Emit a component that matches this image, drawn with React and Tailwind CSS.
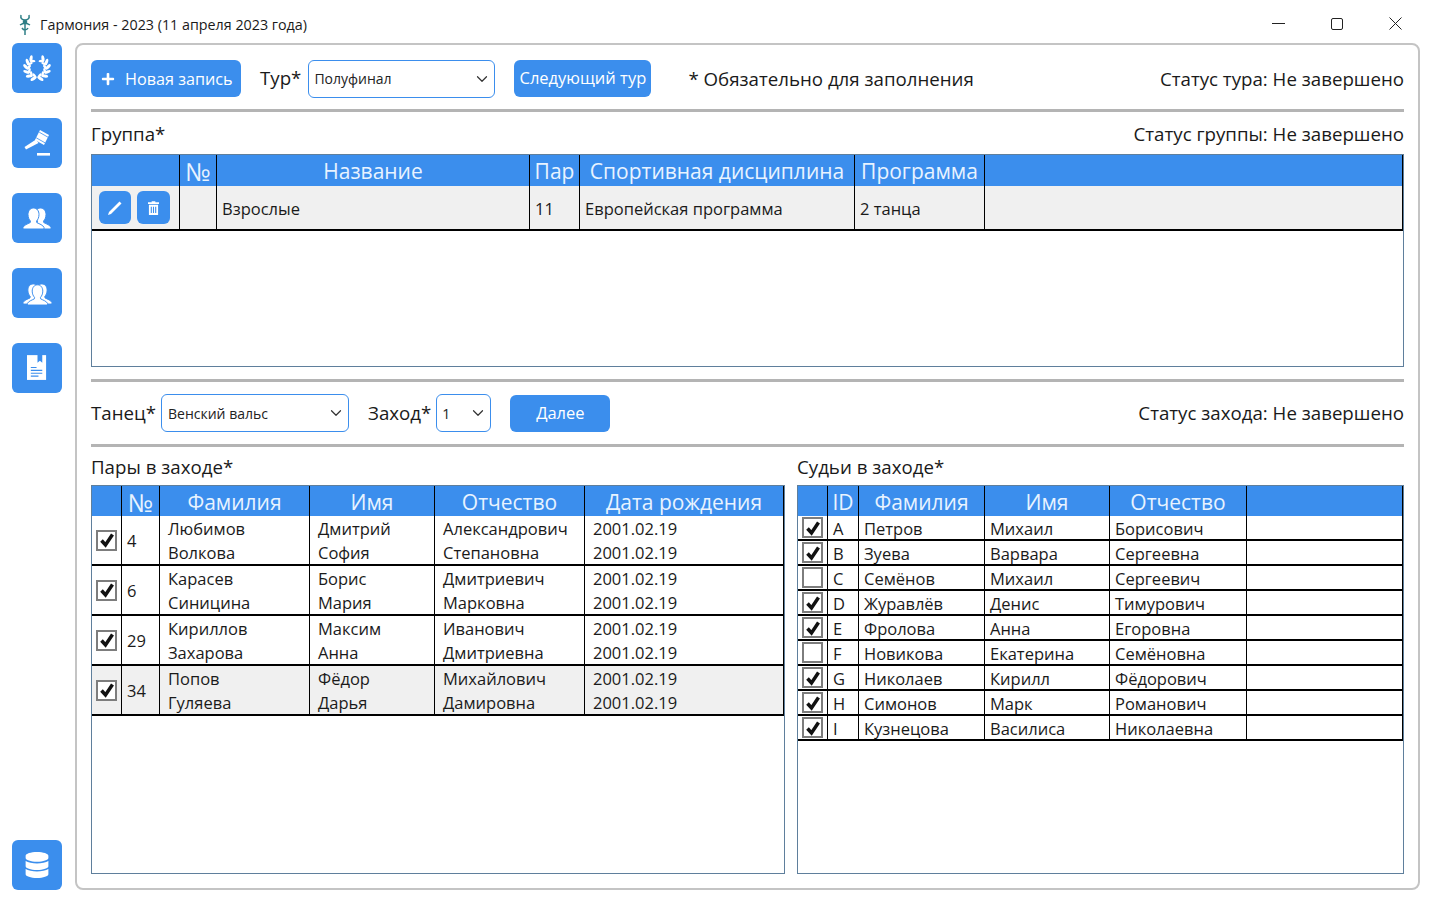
import { FaDatabase, FaPlus } from "react-icons/fa";
import { ChevronDown } from "lucide-react";

const blue = "bg-[#3b8eed]";

const pairs = [
  ["4", "Любимов", "Волкова", "Дмитрий", "София", "Александрович", "Степановна"],
  ["6", "Карасев", "Синицина", "Борис", "Мария", "Дмитриевич", "Марковна"],
  ["29", "Кириллов", "Захарова", "Максим", "Анна", "Иванович", "Дмитриевна"],
  ["34", "Попов", "Гуляева", "Фёдор", "Дарья", "Михайлович", "Дамировна"],
];

const judges = [
  [true, "A", "Петров", "Михаил", "Борисович"],
  [true, "B", "Зуева", "Варвара", "Сергеевна"],
  [false, "C", "Семёнов", "Михаил", "Сергеевич"],
  [true, "D", "Журавлёв", "Денис", "Тимурович"],
  [true, "E", "Фролова", "Анна", "Егоровна"],
  [false, "F", "Новикова", "Екатерина", "Семёновна"],
  [true, "G", "Николаев", "Кирилл", "Фёдорович"],
  [true, "H", "Симонов", "Марк", "Романович"],
  [true, "I", "Кузнецова", "Василиса", "Николаевна"],
];

const Wreath = () => {
  const leaves = [];
  for (let a = 32; a <= 165; a += 26) {
    const r = (a * Math.PI) / 180;
    [1, -1].forEach((s) => {
      // outer leaf splays out from the branch, inner one lies along it
      const x = 12 + s * 9.6 * Math.sin(r);
      const y = 12 - 9.6 * Math.cos(r);
      const ix = 12 + s * 7 * Math.sin(r);
      const iy = 12 - 7 * Math.cos(r);
      leaves.push(
        <ellipse key={`o${a}${s}`} cx={x} cy={y} rx="1.3" ry="2.9" transform={`rotate(${s * (a - 40)} ${x} ${y})`} fill="white" />,
        <ellipse key={`i${a}${s}`} cx={ix} cy={iy} rx="1.1" ry="2.4" transform={`rotate(${s * (a - 125)} ${ix} ${iy})`} fill="white" />
      );
    });
  }
  return <svg viewBox="0 0 24 24" className="w-[28px] h-[28px]">{leaves}</svg>;
};

const Gavel = () => (
  <svg viewBox="0 0 28 28" className="w-[28px] h-[28px]" fill="white">
    <path d="M17 1 L26 6 L21 16 L12 11 Z" />
    <path d="M16.2 3.2 L25 8.2 M13.2 8.8 L22 13.8" stroke="#3b8eed" strokeWidth="0.8" />
    <path d="M13 10.5 L15.5 14 L3 20.5 L1.5 18 Z" />
    <rect x="14" y="24" width="13" height="2.6" />
  </svg>
);

const Person = ({ x = 0 }) => (
  <path transform={`translate(${x} 0)`} d="M10.5 3 C14 3 16 6 16 9.5 C16 12.5 14.8 14.8 13.6 16 L13.8 17.6 C16.5 19 20 20 21 22.4 L21 24 L0 24 L0 22.4 C1 20 4.5 19 7.2 17.6 L7.4 16 C6.2 14.8 5 12.5 5 9.5 C5 6 7 3 10.5 3 Z" />
);

const Users = () => (
  <svg viewBox="0 0 28 26" className="w-[28px] h-[26px]" fill="white" stroke="#3b8eed" strokeWidth="1">
    <Person x={7} />
    <Person x={0} />
  </svg>
);

const Crowd = () => (
  <svg viewBox="0 0 30 26" className="w-[29px] h-[25px]" fill="white" stroke="#3b8eed" strokeWidth="1">
    <Person x={0} />
    <Person x={9} />
    <g transform="translate(4.5 1)"><Person /></g>
  </svg>
);

const Doc = () => (
  <svg viewBox="0 0 22 27" className="w-[21px] h-[26px]">
    <path d="M0 0 H20 V26 H0 Z" fill="white" />
    <path d="M11 0 H16 V8 L13.5 5.8 L11 8 Z" fill="#3b8eed" />
    <path d="M4 13 H10 M4 16 H16 M4 19 H16 M4 22 H12" stroke="#3b8eed" strokeWidth="1.2" />
  </svg>
);

const Logo = () => (
  <svg viewBox="0 0 14 22" className="w-[14px] h-[22px]" fill="none" stroke="#2f7f86" strokeWidth="1.5">
    <path d="M3 1 C2 5 5 6 7 6 C9 6 12 5 11 1" />
    <circle cx="7" cy="8" r="1.6" fill="#2f7f86" />
    <path d="M2 11 C5 9 9 9 12 11 M7 9 L7 21 M4 14 C6 17 9 16 10 14" />
  </svg>
);

const Pencil = () => (
  <svg viewBox="0 0 16 16" className="w-[16px] h-[16px]" fill="white">
    <path d="M12.5 1.5 L14.5 3.5 L4 14 L1 15 L2 12 Z" />
  </svg>
);

const Trash = () => (
  <svg viewBox="0 0 12 15" className="w-[11px] h-[14px]" fill="white">
    <path d="M4 0 H8 V1.2 H12 V3 H0 V1.2 H4 Z" />
    <path fillRule="evenodd" d="M1 4 H11 V15 H1 Z M3 6 V13 H4.2 V6 Z M5.4 6 V13 H6.6 V6 Z M7.8 6 V13 H9 V6 Z" />
  </svg>
);

const SideButton = ({ children, className = "" }) => (
  <button className={`w-[50px] h-[50px] rounded-md ${blue} flex items-center justify-center ${className}`}>{children}</button>
);

const Select = ({ value, className }) => (
  <div className={`h-[38px] border border-[#3b8eed] rounded-md flex items-center justify-between pl-[5px] pr-[3px] text-[14px] text-[#222] ${className}`}>
    <span>{value}</span>
    <ChevronDown size={18} strokeWidth={1.6} className="text-[#333]" />
  </div>
);

const Hr = ({ className = "" }) => <div className={`h-[3px] bg-[#b4b4b4] ${className}`} />;

const Check = ({ checked }) => (
  <div className="w-[21px] h-[21px] border-2 border-[#7d7d7d] bg-white flex items-center justify-center shrink-0">
    {checked && (
      <svg viewBox="0 0 16 16" className="w-[16px] h-[16px]">
        <path d="M2.5 8.5 L6.5 13 L13.5 2.5" fill="none" stroke="#111" strokeWidth="3.5" />
      </svg>
    )}
  </div>
);

const Head = ({ className = "", children }) => (
  <div className={`h-full border-r border-black flex items-center justify-center pt-[2px] text-[21px] leading-none whitespace-nowrap ${className}`}>{children}</div>
);

// pad holds the padding classes, they differ between the tables
const Cell = ({ className = "", pad = "pl-[5px] pt-[1px]", children }) => (
  <div className={`h-full border-r border-black flex flex-col justify-center leading-[24px] whitespace-nowrap ${pad} ${className}`}>{children}</div>
);

const App = () => {
  return (
    <div className="w-[1434px] h-[905px] bg-white overflow-hidden text-[#1a1a1a] font-['Open_Sans',sans-serif] flex flex-col">
      {/* title bar */}
      <div className="h-[43px] flex items-center pl-[18px] pr-[32px] pt-[6px] shrink-0">
        <Logo />
        <span className="ml-[8px] text-[14.3px]">Гармония - 2023 (11 апреля 2023 года)</span>
        <div className="ml-auto mb-[2px] flex items-center gap-[46px]">
          <div className="w-[13px] h-[1px] bg-[#222]" />
          <div className="w-[12px] h-[12px] border border-[#222] rounded-[2px]" />
          <svg viewBox="0 0 13 13" className="w-[13px] h-[13px]"><path d="M0.5 0.5 L12.5 12.5 M12.5 0.5 L0.5 12.5" stroke="#222" strokeWidth="1" /></svg>
        </div>
      </div>

      <div className="flex h-[847px]">
        {/* sidebar */}
        <div className="w-[75px] pl-[12px] flex flex-col gap-[25px] shrink-0">
          <SideButton><Wreath /></SideButton>
          <SideButton><Gavel /></SideButton>
          <SideButton><Users /></SideButton>
          <SideButton><Crowd /></SideButton>
          <SideButton><Doc /></SideButton>
          <SideButton className="mt-auto"><FaDatabase size={26} color="white" /></SideButton>
        </div>

        {/* main panel */}
        <div className="w-[1345px] border-2 border-[#c4c4c4] rounded-lg px-[14px] pt-[15px] flex flex-col">
          {/* tour row */}
          <div className="h-[37px] flex items-center text-[18.7px] shrink-0">
            <button className={`h-[37px] w-[150px] ${blue} rounded-md text-white text-[16.2px] flex items-center pl-[10px] pt-[1px] gap-[10px]`}>
              <FaPlus size={14} /> Новая запись
            </button>
            <span className="ml-[19px]">Тур*</span>
            <Select value="Полуфинал" className="ml-[7px] w-[187px]" />
            <button className={`ml-[19px] h-[37px] w-[137px] ${blue} rounded-md text-white text-[16.5px]`}>Следующий тур</button>
            <span className="ml-[37px] pt-[1px]">* Обязательно для заполнения</span>
            <span className="ml-auto pt-[1px]">Статус тура: Не завершено</span>
          </div>
          <Hr className="mt-[12px] shrink-0" />

          {/* group */}
          <div className="h-[42px] pt-[2px] flex items-center justify-between text-[18.7px] shrink-0">
            <span>Группа*</span>
            <span>Статус группы: Не завершено</span>
          </div>
          <div className="h-[213px] border border-[#5f7f9c] shrink-0">
            <div className={`h-[31px] ${blue} text-[#e8f3ff] flex`}>
              <Head className="w-[88px]" />
              <Head className="w-[37px]"><span className="text-[25px]">№</span></Head>
              <Head className="w-[313px]">Название</Head>
              <Head className="w-[50px]">Пар</Head>
              <Head className="w-[275px]">Спортивная дисциплина</Head>
              <Head className="w-[130px]">Программа</Head>
              <Head className="flex-1" />
            </div>
            <div className="h-[45px] bg-[#f0f0f0] border-b-2 border-black flex text-[16.5px]">
              <div className="w-[88px] h-full border-r border-black flex items-center pl-[7px] gap-[6px]">
                <button className={`w-[32px] h-[33px] ${blue} rounded-md flex items-center justify-center`}><Pencil /></button>
                <button className={`w-[33px] h-[33px] ${blue} rounded-md flex items-center justify-center`}><Trash /></button>
              </div>
              <Cell className="w-[37px]" />
              <Cell pad="pl-[5px] pt-[3px]" className="w-[313px]">Взрослые</Cell>
              <Cell pad="pl-[5px] pt-[3px]" className="w-[50px]">11</Cell>
              <Cell pad="pl-[5px] pt-[3px]" className="w-[275px]">Европейская программа</Cell>
              <Cell pad="pl-[5px] pt-[3px]" className="w-[130px]">2 танца</Cell>
              <Cell className="flex-1" />
            </div>
          </div>
          <Hr className="mt-[12px] shrink-0" />

          {/* dance row */}
          <div className="h-[62px] flex items-center text-[18.7px] shrink-0">
            <span>Танец*</span>
            <Select value="Венский вальс" className="ml-[5px] w-[188px] pl-[6px]" />
            <span className="ml-[19px]">Заход*</span>
            <Select value="1" className="ml-[5px] w-[55px]" />
            <button className={`ml-[19px] h-[37px] w-[100px] ${blue} rounded-md text-white text-[16.5px]`}>Далее</button>
            <span className="ml-auto">Статус захода: Не завершено</span>
          </div>
          <Hr className="shrink-0" />

          {/* tables */}
          <div className="flex gap-[12px] mt-[6px]">
            <div className="w-[694px]">
              <div className="h-[32px] pb-[4px] flex items-center text-[18.7px]">Пары в заходе*</div>
              <div className="h-[389px] border border-[#5f7f9c]">
                <div className={`h-[30px] ${blue} text-[#e8f3ff] flex`}>
                  <Head className="w-[30px]" />
                  <Head className="w-[38px]"><span className="text-[25px]">№</span></Head>
                  <Head className="w-[150px]">Фамилия</Head>
                  <Head className="w-[125px]">Имя</Head>
                  <Head className="w-[150px]">Отчество</Head>
                  <Head className="w-[199px]">Дата рождения</Head>
                </div>
                {pairs.map((p, i) => (
                  <div key={p[0]} className={`h-[50px] border-b-2 border-black flex text-[16.5px] ${i === 3 ? "bg-[#f0f0f0]" : "bg-white"}`}>
                    <div className="w-[30px] h-full border-r border-black flex items-center justify-center"><Check checked /></div>
                    <Cell className="w-[38px]">{p[0]}</Cell>
                    <Cell pad="pl-[8px] pt-[1px]" className="w-[150px]"><span>{p[1]}</span><span>{p[2]}</span></Cell>
                    <Cell pad="pl-[8px] pt-[1px]" className="w-[125px]"><span>{p[3]}</span><span>{p[4]}</span></Cell>
                    <Cell pad="pl-[8px] pt-[1px]" className="w-[150px]"><span>{p[5]}</span><span>{p[6]}</span></Cell>
                    <Cell pad="pl-[8px] pt-[1px]" className="w-[199px]"><span>2001.02.19</span><span>2001.02.19</span></Cell>
                  </div>
                ))}
              </div>
            </div>
            <div className="w-[607px]">
              <div className="h-[32px] pb-[4px] flex items-center text-[18.7px]">Судьи в заходе*</div>
              <div className="h-[389px] border border-[#5f7f9c]">
                <div className={`h-[30px] ${blue} text-[#e8f3ff] flex`}>
                  <Head className="w-[30px]" />
                  <Head className="w-[31px]">ID</Head>
                  <Head className="w-[126px]">Фамилия</Head>
                  <Head className="w-[125px]">Имя</Head>
                  <Head className="w-[137px]">Отчество</Head>
                  <Head className="flex-1" />
                </div>
                {judges.map((j) => (
                  <div key={j[1]} className="h-[25px] border-b-2 border-black flex text-[16.5px] bg-white">
                    <div className="w-[30px] h-full border-r border-black flex items-center justify-center"><Check checked={j[0]} /></div>
                    <Cell pad="pl-[5px] pt-[3px]" className="w-[31px]">{j[1]}</Cell>
                    <Cell pad="pl-[5px] pt-[3px]" className="w-[126px]">{j[2]}</Cell>
                    <Cell pad="pl-[5px] pt-[3px]" className="w-[125px]">{j[3]}</Cell>
                    <Cell pad="pl-[5px] pt-[3px]" className="w-[137px]">{j[4]}</Cell>
                    <Cell className="flex-1" />
                  </div>
                ))}
              </div>
            </div>
          </div>
        </div>
      </div>
    </div>
  );
};

export default App;
